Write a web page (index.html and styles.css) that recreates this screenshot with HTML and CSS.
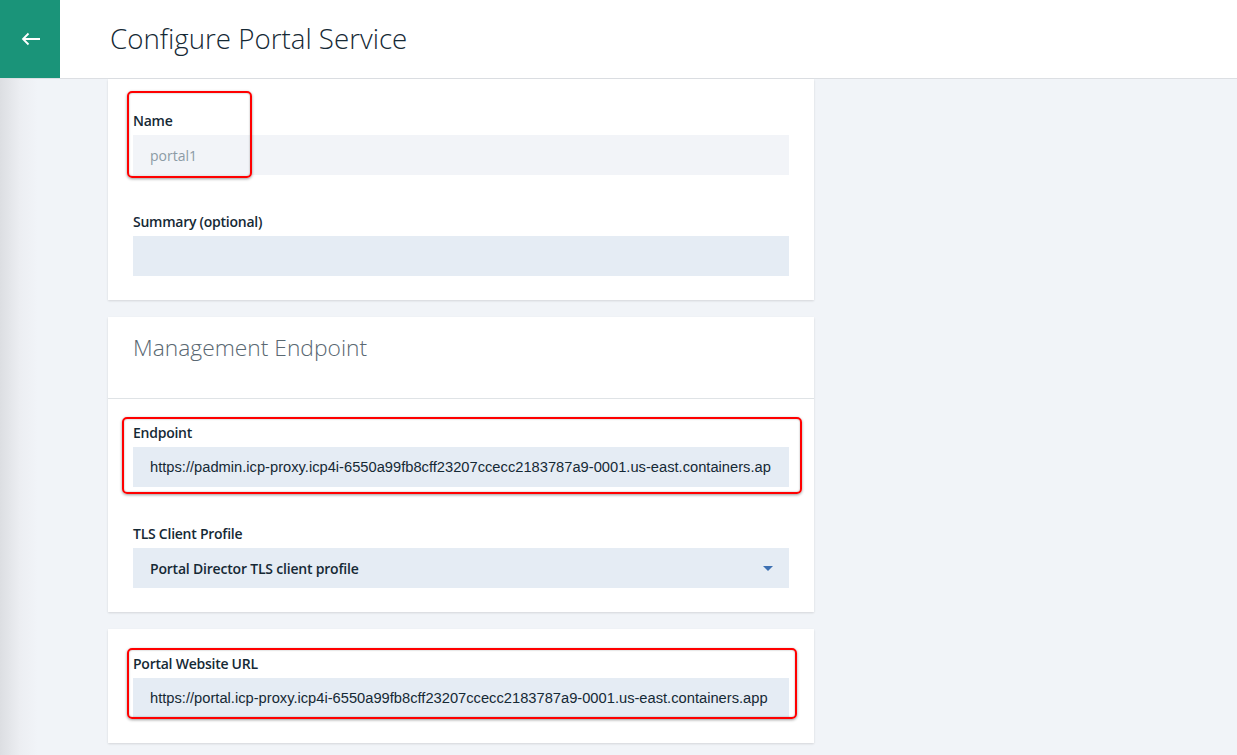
FILE: index.html
```html
<!DOCTYPE html>
<html lang="en">
<head>
<meta charset="utf-8">
<title>Configure Portal Service</title>
<link rel="stylesheet" href="styles.css">
</head>
<body>
<header class="topbar">
  <button class="back" aria-label="Back">
    <svg width="20" height="14" viewBox="0 0 20 14" aria-hidden="true">
      <path d="M19 7H2.5M7.5 1.5L2 7l5.5 5.5" fill="none" stroke="#fff" stroke-width="1.8"/>
    </svg>
  </button>
  <h1 class="title">Configure Portal Service</h1>
</header>
<main class="main">
  <section class="card card-first">
    <div class="field">
      <div class="label">Name</div>
      <div class="input input-disabled"><span class="val">portal1</span></div>
      <div class="mark mark-name"></div>
    </div>
    <div class="field">
      <div class="label">Summary (optional)</div>
      <div class="input"><span class="val"></span></div>
    </div>
  </section>

  <section class="card card-split">
    <div class="card-head">
      <h2 class="card-title">Management Endpoint</h2>
    </div>
    <div class="card-body">
      <div class="field">
        <div class="label">Endpoint</div>
        <div class="input"><span class="val">https://padmin.icp-proxy.icp4i-6550a99fb8cff23207ccecc2183787a9-0001.us-east.containers.ap</span></div>
        <div class="mark mark-endpoint"></div>
      </div>
      <div class="field">
        <div class="label">TLS Client Profile</div>
        <div class="input select"><span class="val strong">Portal Director TLS client profile</span>
          <svg class="caret" width="10" height="5" viewBox="0 0 10 5" aria-hidden="true"><path d="M0 0h10L5 5z" fill="#3d70b2"/></svg>
        </div>
      </div>
    </div>
  </section>

  <section class="card">
    <div class="field">
      <div class="label">Portal Website URL</div>
      <div class="input"><span class="val">https://portal.icp-proxy.icp4i-6550a99fb8cff23207ccecc2183787a9-0001.us-east.containers.app</span></div>
      <div class="mark mark-url"></div>
    </div>
  </section>
</main>
</body>
</html>
```

FILE: styles.css
```css
* { box-sizing: border-box; }
html, body { margin: 0; padding: 0; }
body {
  font-family: "Open Sans", "Noto Sans", sans-serif;
  color: #152935;
  background: linear-gradient(to right, #dcdee2 0px, #eceef2 20px, #f1f4f8 38px, #f1f4f8 100%);
  min-height: 755px;
}
.topbar {
  height: 79px;
  background: #fff;
  border-bottom: 1px solid #dcdfe3;
  display: flex;
  align-items: stretch;
}
.back {
  width: 60px;
  border: 0;
  padding: 0;
  margin: 0;
  background: #1a9479;
  display: flex;
  align-items: center;
  justify-content: center;
  padding-left: 2px;
}
.title {
  margin: 0 0 0 50px;
  align-self: center;
  font-family: "Open Sans", sans-serif;
  font-weight: 300;
  font-size: 27.7px;
  color: #152935;
  padding-bottom: 2px;
}
.main {
  padding: 0 0 12px 108px;
  display: flex;
  flex-direction: column;
  gap: 17px;
}
.card {
  width: 706px;
  background: #fff;
  box-shadow: 0 1px 2px rgba(0,0,0,0.12);
  padding: 26px 25px 25px;
  display: flex;
  flex-direction: column;
  gap: 38px;
}
.card-first { padding-top: 33px; padding-bottom: 24px; }
.card-split { padding: 0; gap: 0; }
.card-head {
  height: 82px;
  border-bottom: 1px solid #dfe3e6;
  padding: 16px 25px 0;
}
.card-title {
  margin: 0;
  font-family: "Open Sans", sans-serif;
  font-weight: 300;
  font-size: 22.8px;
  line-height: 30px;
  color: #5a6872;
}
.card-body {
  padding: 25px 25px 24px;
  display: flex;
  flex-direction: column;
  gap: 38px;
}
.field { position: relative; }
.label {
  font-size: 14px;
  font-weight: 600;
  line-height: 18px;
  letter-spacing: -0.25px;
  margin-bottom: 5px;
  color: #152935;
}
.input {
  height: 40px;
  background: #e5ecf4;
  padding: 0 16px 0 17px;
  display: flex;
  align-items: center;
  font-family: "Liberation Sans", Arial, sans-serif;
  font-size: 14.7px;
  color: #152935;
}
.input-disabled { background: #f2f4f8; color: #8c9ba5; font-family: "Open Sans", sans-serif; font-size: 14px; }
.val {
  flex: 1;
  min-width: 0;
  overflow: hidden;
  white-space: nowrap;
}
.strong { font-family: "Open Sans", sans-serif; font-weight: 600; font-size: 14px; letter-spacing: -0.2px; }
.caret { flex: none; margin-right: 0; margin-left: 8px; }
.mark {
  position: absolute;
  border: 2px solid #ff0000;
  border-radius: 5px;
  box-shadow: 0 1px 3px rgba(0,0,0,0.4), inset 0 0 2px rgba(0,0,0,0.35);
  pointer-events: none;
}
.mark-name { top: -21px; left: -6px; width: 125px; height: 87px; }
.mark-endpoint { top: -7px; left: -11px; width: 680px; height: 77px; }
.mark-url { top: -7px; left: -6px; width: 670px; height: 71px; }
```
